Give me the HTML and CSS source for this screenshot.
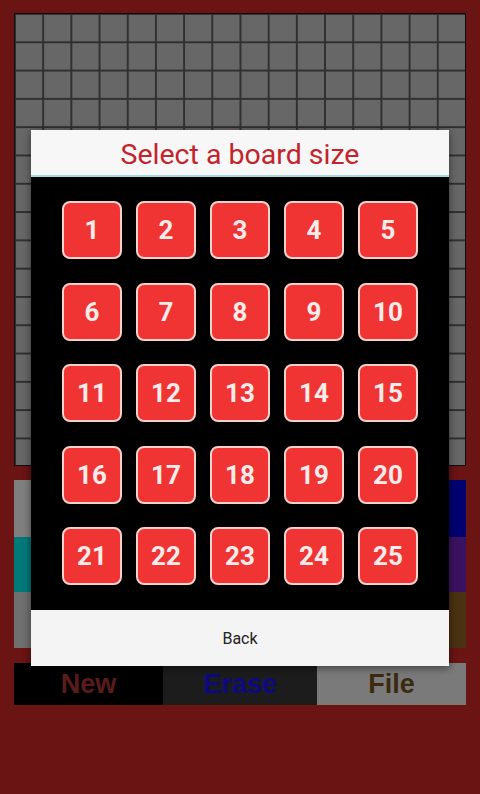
FILE: index.html
```html
<!DOCTYPE html>
<html>

<head>
  <meta charset="utf-8">
  <meta name="viewport" content="width=device-width">
  <title>Pixel Board</title>

  <link rel="stylesheet" href="styles.css">
</head>

<body>
  <main class="app">
    <div class="board"></div>

    <section class="palette">
      <div class="swatch white"></div>
      <div class="swatch"></div>
      <div class="swatch"></div>
      <div class="swatch"></div>
      <div class="swatch"></div>
      <div class="swatch"></div>
      <div class="swatch"></div>
      <div class="swatch blue"></div>

      <div class="swatch cyan"></div>
      <div class="swatch"></div>
      <div class="swatch"></div>
      <div class="swatch"></div>
      <div class="swatch"></div>
      <div class="swatch"></div>
      <div class="swatch"></div>
      <div class="swatch purple"></div>

      <div class="swatch silver"></div>
      <div class="swatch"></div>
      <div class="swatch"></div>
      <div class="swatch"></div>
      <div class="swatch"></div>
      <div class="swatch"></div>
      <div class="swatch"></div>
      <div class="swatch brown"></div>
    </section>

    <nav class="tools">
      <button class="tool new">New</button>
      <button class="tool erase">Erase</button>
      <button class="tool file">File</button>
    </nav>
  </main>

  <div class="dim"></div>

  <div class="dialog">
    <h1 class="dialog-title">Select a board size</h1>
    <div class="sizes">
      <button class="size">1</button>
      <button class="size">2</button>
      <button class="size">3</button>
      <button class="size">4</button>
      <button class="size">5</button>
      <button class="size">6</button>
      <button class="size">7</button>
      <button class="size">8</button>
      <button class="size">9</button>
      <button class="size">10</button>
      <button class="size">11</button>
      <button class="size">12</button>
      <button class="size">13</button>
      <button class="size">14</button>
      <button class="size">15</button>
      <button class="size">16</button>
      <button class="size">17</button>
      <button class="size">18</button>
      <button class="size">19</button>
      <button class="size">20</button>
      <button class="size">21</button>
      <button class="size">22</button>
      <button class="size">23</button>
      <button class="size">24</button>
      <button class="size">25</button>
    </div>
    <button class="back">Back</button>
  </div>
</body>

</html>
```

FILE: styles.css
```css
* {
  box-sizing: border-box;
}

body {
  margin: 0;
  height: 794px;
  background-color: #d42828;
  font-family: Roboto, "Liberation Sans", sans-serif;
  overflow: hidden;
}

button {
  font-family: inherit;
  border: none;
  padding: 0;
}

.app {
  display: flex;
  flex-direction: column;
  padding: 13px 14px 0 14px;
}

.board {
  width: 452px;
  height: 453px;
  border: 1px solid #1a1a1a;
  background-color: #cecece;
  background-image:
    linear-gradient(to right, #606060 2px, transparent 2px),
    linear-gradient(to bottom, #606060 2px, transparent 2px);
  background-size: 28.2px 28.3px;
  background-position: -1px -1px;
}

.palette {
  margin-top: 14px;
  display: grid;
  grid-template-columns: repeat(8, 1fr);
  grid-template-rows: 57px 55px 56px;
}

.swatch {
  background-color: #888;
}

.white { background-color: #fefefe; }
.cyan { background-color: #00f2f2; }
.silver { background-color: #dedede; }
.blue { background-color: #0000e2; }
.purple { background-color: #7622c2; }
.brown { background-color: #946222; }

.tools {
  margin-top: 15px;
  display: grid;
  grid-template-columns: 149px 154px 149px;
  height: 42px;
}

.tool {
  font-family: "Liberation Sans", Arial, sans-serif;
  font-weight: bold;
  font-size: 27px;
}

.new {
  background-color: #000;
  color: #b43636;
}

.erase {
  background-color: #383838;
  color: #1616ff;
}

.file {
  background-color: #f4f4f4;
  color: #765422;
}

.dim {
  position: fixed;
  inset: 0;
  background-color: rgba(0, 0, 0, 0.5);
}

.dialog {
  position: fixed;
  left: 31px;
  top: 130px;
  width: 418px;
  display: flex;
  flex-direction: column;
  box-shadow: 0 2px 8px rgba(0, 0, 0, 0.5);
}

.dialog-title {
  margin: 0;
  height: 47px;
  padding-top: 8px;
  background-color: #f7f7f7;
  border-bottom: 2px solid #a4d6e4;
  color: #c3232b;
  font-size: 28.5px;
  font-weight: normal;
  text-align: center;
}

.sizes {
  display: grid;
  grid-template-columns: repeat(5, 60px);
  grid-auto-rows: 58px;
  column-gap: 14px;
  row-gap: 23.6px;
  padding: 24px 31px 25px 31px;
  background-color: #000;
}

.size {
  border: 2px solid #f7d2cc;
  border-radius: 8px;
  background-color: #f03434;
  color: #f9ecea;
  font-size: 26px;
  font-weight: bold;
}

.back {
  height: 56px;
  background-color: #f4f4f4;
  color: #222;
  font-size: 16px;
}
```
